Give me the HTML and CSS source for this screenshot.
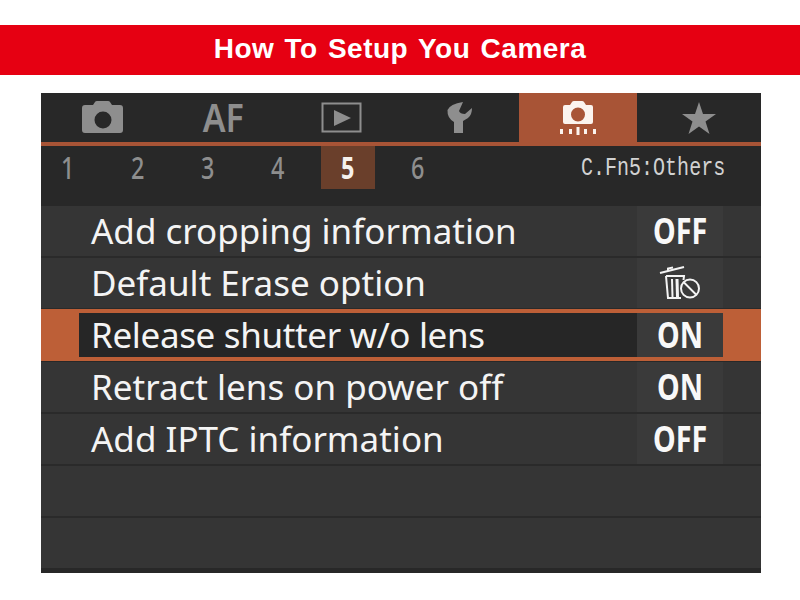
FILE: index.html
```html
<!DOCTYPE html>
<html lang="en">
<head>
    <meta charset="UTF-8">
    <title>How To Setup You Camera</title>
    <link rel="stylesheet" href="styles.css">
</head>
<body>
    <h1 class="banner">How To Setup You Camera</h1>

    <div class="screen">
        <div class="tabs">
            <div class="tab">
                <svg width="41" height="33" viewBox="0 0 41 33">
                    <path fill-rule="evenodd" fill="#8e8e8e" d="M11 4 L13 1 Q13.500 0 15 0 L26 0 Q27.500 0 28 1 L30 4 L38 4 Q41 4 41 7 L41 29 Q41 32 38 32 L3 32 Q0 32 0 29 L0 7 Q0 4 3 4 Z M21 10.500 A8.500 8.500 0 1 0 21 27.500 A8.500 8.500 0 1 0 21 10.500 Z"/>
                </svg>
            </div>
            <div class="tab"><span class="tab-text">AF</span></div>
            <div class="tab">
                <svg width="42" height="32" viewBox="0 0 42 32">
                    <rect x="1.500" y="1.500" width="38" height="28" fill="none" stroke="#8e8e8e" stroke-width="2"/>
                    <path fill="#8e8e8e" d="M13 8 L30 16 L13 24 Z"/>
                </svg>
            </div>
            <div class="tab">
                <svg width="26" height="32" viewBox="0 0 26 32">
                    <path fill="#8e8e8e" d="M0.500 8 Q3 2 16 0 L12 9 Q13 12 18 12 L25 6 Q25 13 21 16 L16 19 L16 31 L7 31 L7 20 Q0 16 0.500 8 Z"/>
                </svg>
            </div>
            <div class="tab tab-active">
                <svg width="38" height="34" viewBox="0 0 38 34">
                    <path fill-rule="evenodd" fill="#fbf3ee" d="M11 4 L13 1 Q13.500 0 15 0 L23 0 Q24.500 0 25 1 L27 4 L32 4 Q34 4 34 6 L34 21 Q34 23 32 23 L6 23 Q4 23 4 21 L4 6 Q4 4 6 4 Z M19 6.500 A7 7 0 1 0 19 20.500 A7 7 0 1 0 19 6.500 Z"/>
                    <path fill="#fbf3ee" d="M1 28 h3 v5 h-3 Z M10 28 h3 v5 h-3 Z M17.500 26 h3 v8 h-3 Z M25 28 h3 v5 h-3 Z M34 28 h3 v5 h-3 Z"/>
                </svg>
            </div>
            <div class="tab">
                <svg width="34" height="32" viewBox="0 0 34 32">
                    <path fill="#8e8e8e" d="M17 0 L21 12 L34 12 L23.500 19.500 L27.500 32 L17 24.500 L6.500 32 L10.500 19.500 L0 12 L13 12 Z"/>
                </svg>
            </div>
        </div>

        <div class="subtabs">
            <div class="pages">
                <span class="page"><span class="narrow">1</span></span>
                <span class="page"><span class="narrow">2</span></span>
                <span class="page"><span class="narrow">3</span></span>
                <span class="page"><span class="narrow">4</span></span>
                <span class="page page-active"><span class="narrow">5</span></span>
                <span class="page"><span class="narrow">6</span></span>
            </div>
            <div class="group-name">C.Fn5:Others</div>
        </div>

        <div class="menu">
            <div class="row">
                <div class="row-label">Add cropping information</div>
                <div class="row-value"><span class="narrow-value">OFF</span></div>
            </div>
            <div class="row">
                <div class="row-label">Default Erase option</div>
                <div class="row-value">
                    <svg width="42" height="36" viewBox="0 0 42 36">
                        <g fill="none" stroke="#f4f4f4" stroke-width="2">
                            <path d="M1 8 L25 2"/>
                            <path d="M9 6 L9 3.500 L14 2.500"/>
                            <path d="M7 11 L9 33 L22 33"/>
                            <path d="M7 11 L25 11 L24.500 15"/>
                            <path d="M13 14 L13.500 32"/>
                            <path d="M18 14 L18.500 32" stroke-width="3"/>
                            <circle cx="31" cy="23.500" r="9"/>
                            <path d="M24.500 17 L37.500 30"/>
                        </g>
                    </svg>
                </div>
            </div>
            <div class="row row-selected">
                <div class="row-inner">
                    <div class="row-label">Release shutter w/o lens</div>
                    <div class="row-value"><span class="narrow-value">ON</span></div>
                </div>
            </div>
            <div class="row">
                <div class="row-label">Retract lens on power off</div>
                <div class="row-value"><span class="narrow-value">ON</span></div>
            </div>
            <div class="row">
                <div class="row-label">Add IPTC information</div>
                <div class="row-value"><span class="narrow-value">OFF</span></div>
            </div>
            <div class="row"></div>
            <div class="row row-last"></div>
        </div>
    </div>
</body>
</html>
```

FILE: styles.css
```css
body {
    margin: 0;
    background: white;
    font-family: "Noto Sans", sans-serif;
}

.banner {
    margin: 25px 0 18px;
    height: 50px;
    line-height: 48px;
    background: #e60012;
    color: white;
    text-align: center;
    font-family: "Liberation Sans", sans-serif;
    font-size: 28px;
    font-weight: bold;
    letter-spacing: 0.5px;
    word-spacing: 2px;
}

.screen {
    width: 720px;
    height: 480px;
    margin-left: 41px;
    background: #282828;
}

.tabs {
    display: grid;
    grid-template-columns: 122px 120px 118px 118px 118px 124px;
    grid-template-rows: 49px;
    border-bottom: 4px solid #a85436;
}

.tab {
    display: flex;
    justify-content: center;
    align-items: center;
}

.tab-active {
    background: #a85436;
}

.tab-text {
    margin-bottom: 2px;
    color: #8e8e8e;
    font-size: 40px;
    line-height: 40px;
    font-weight: 600;
    transform: scaleX(0.85);
}

.subtabs {
    display: flex;
    justify-content: space-between;
    height: 60px;
}

.pages {
    display: flex;
}

.page {
    width: 54px;
    height: 43px;
    margin-right: 16px;
    display: flex;
    justify-content: center;
    align-items: center;
    color: #8e8e8e;
    font-size: 30px;
    font-weight: 500;
}

.page-active {
    background: #6a3f2b;
    color: #f6f1ee;
    font-weight: bold;
}

.narrow {
    display: inline-block;
    transform: scaleX(0.78);
}

.group-name {
    width: 144px;
    margin-right: 36px;
    height: 43px;
    line-height: 45px;
    font-family: "Liberation Mono", monospace;
    font-size: 26px;
    color: #d2d2d2;
    white-space: nowrap;
    transform: scaleX(0.77);
    transform-origin: left center;
}

.menu {
    display: flex;
    flex-direction: column;
}

.row {
    display: flex;
    height: 52px;
    box-sizing: border-box;
    border-bottom: 2px solid #2a2a2a;
    background: #353535;
}

.row-last {
    height: 50px;
    border-bottom: 0;
}

.row-label {
    flex: 1;
    padding-left: 50px;
    line-height: 50px;
    font-size: 35px;
    color: #f4f4f4;
    white-space: nowrap;
}

.row-value {
    width: 86px;
    margin-right: 38px;
    display: flex;
    justify-content: center;
    align-items: center;
    background: #3a3a3a;
}

.narrow-value {
    display: inline-block;
    margin-bottom: 2px;
    color: #f8f8f8;
    font-size: 35px;
    font-weight: bold;
    transform: scaleX(0.82);
}

/* sits one pixel up over the separator above it */
.row-selected {
    margin: -1px 0 1px;
    padding: 4px 38px;
    border-bottom: 0;
    background: #bd5f37;
}

.row-inner {
    flex: 1;
    display: flex;
    background: #262626;
}

.row-inner .row-label {
    padding-left: 12px;
    line-height: 44px;
    letter-spacing: -0.35px;
}

.row-inner .row-value {
    margin-right: 0;
}
```
